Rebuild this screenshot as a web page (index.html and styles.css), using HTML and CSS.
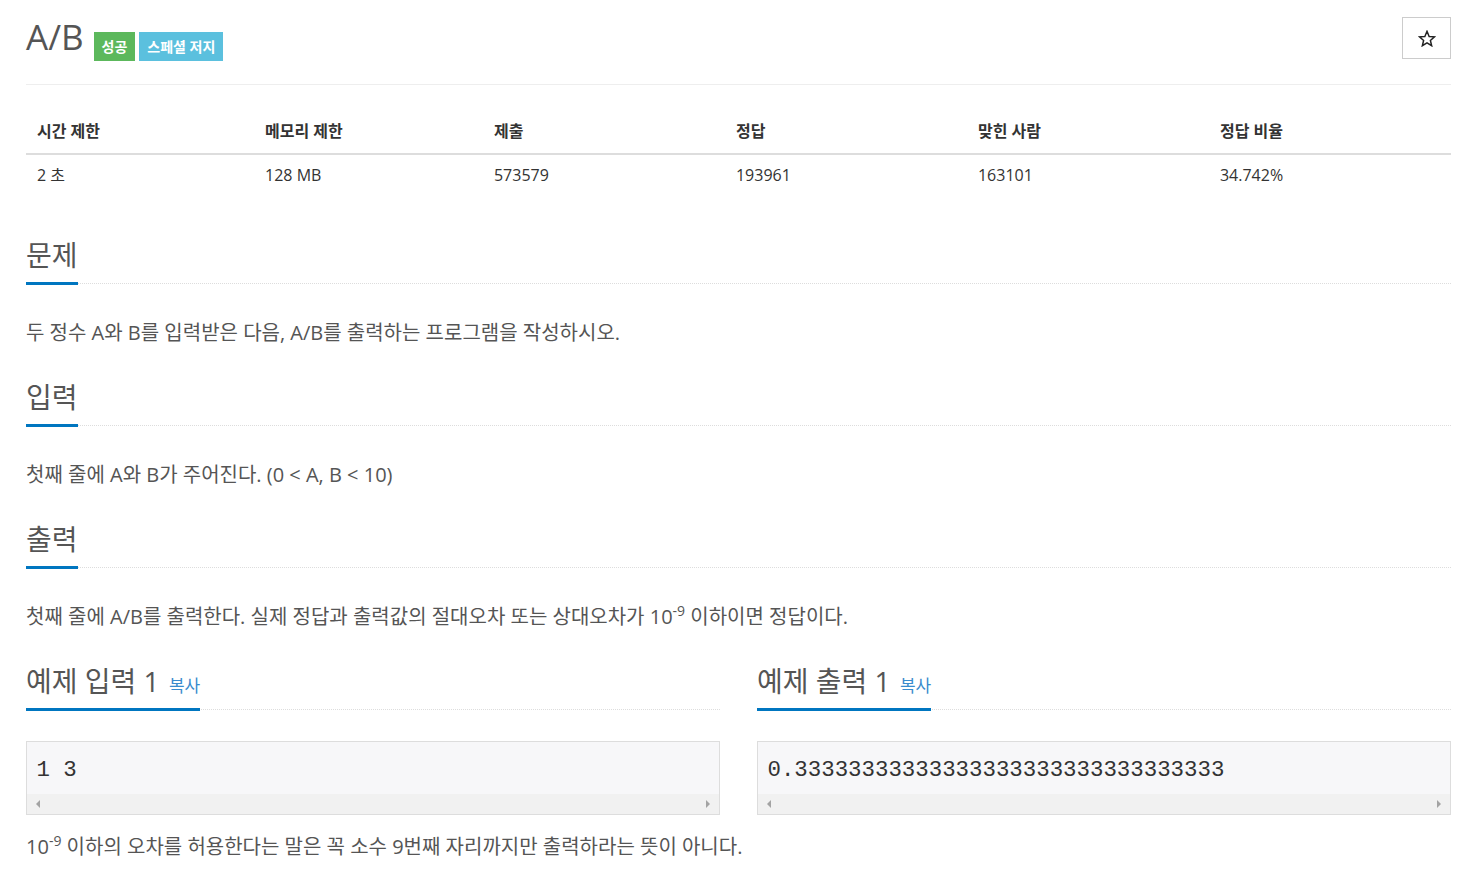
FILE: index.html
```html
<!DOCTYPE html>
<html lang="ko">
<head>
    <meta charset="UTF-8">
    <meta name="viewport" content="width=device-width, initial-scale=1.0">
    <title>A/B</title>
    <link rel="stylesheet" href="styles.css">
</head>
<body>
    <div class="page">
        <div class="page-header">
            <h1 class="title">A/B<span class="label label-success">성공</span><span class="label label-info">스페셜 저지</span></h1>
            <button class="star-btn" type="button">
                <svg width="18" height="17" viewBox="0 0 24 23">
                    <path d="M12 1.8l2.9 6.9 7.3.6-5.6 4.8 1.7 7.2L12 17.4l-6.3 3.9 1.7-7.2-5.6-4.8 7.3-.6z" fill="none" stroke="#222" stroke-width="2" stroke-linejoin="miter"/>
                </svg>
            </button>
        </div>

        <table class="info-table">
            <thead>
                <tr>
                    <th class="col-a">시간 제한</th>
                    <th class="col-b">메모리 제한</th>
                    <th class="col-c">제출</th>
                    <th class="col-c">정답</th>
                    <th class="col-c">맞힌 사람</th>
                    <th class="col-c">정답 비율</th>
                </tr>
            </thead>
            <tbody>
                <tr>
                    <td>2 초</td>
                    <td>128 MB</td>
                    <td>573579</td>
                    <td>193961</td>
                    <td>163101</td>
                    <td>34.742%</td>
                </tr>
            </tbody>
        </table>

        <section class="problem-section">
            <div class="headline"><h2><span>문제</span></h2></div>
            <p>두 정수 A와 B를 입력받은 다음, A/B를 출력하는 프로그램을 작성하시오.</p>
        </section>

        <section class="problem-section">
            <div class="headline"><h2><span>입력</span></h2></div>
            <p>첫째 줄에 A와 B가 주어진다. (0 &lt; A, B &lt; 10)</p>
        </section>

        <section class="problem-section">
            <div class="headline"><h2><span>출력</span></h2></div>
            <p>첫째 줄에 A/B를 출력한다. 실제 정답과 출력값의 절대오차 또는 상대오차가 10<sup>-9</sup> 이하이면 정답이다.</p>
        </section>

        <div class="samples">
            <div class="sample">
                <div class="headline"><h2><span>예제 입력 1 <a class="copy-btn" href="#">복사</a></span></h2></div>
                <div class="sample-box">
                    <pre>1 3</pre>
                    <div class="fake-scroll"><i class="arrow-left"></i><i class="arrow-right"></i></div>
                </div>
            </div>
            <div class="sample">
                <div class="headline"><h2><span>예제 출력 1 <a class="copy-btn" href="#">복사</a></span></h2></div>
                <div class="sample-box">
                    <pre>0.33333333333333333333333333333333</pre>
                    <div class="fake-scroll"><i class="arrow-left"></i><i class="arrow-right"></i></div>
                </div>
            </div>
        </div>

        <p class="hint">10<sup>-9</sup> 이하의 오차를 허용한다는 말은 꼭 소수 9번째 자리까지만 출력하라는 뜻이 아니다.</p>
    </div>
</body>
</html>
```

FILE: styles.css
```css
body {
    margin: 0;
    font-family: 'Open Sans', 'Noto Sans CJK KR', sans-serif;
    color: #555;
    background-color: white;
}
.page {
    margin: 0 10px 0 26px;
}
.page-header {
    display: flex;
    justify-content: space-between;
    align-items: flex-start;
    height: 42px;
    padding-top: 17px;
    padding-bottom: 25px;
    border-bottom: 1px solid #eee;
}
.title {
    margin: 0;
    font-size: 35px;
    font-weight: normal;
    line-height: 40px;
    color: #555;
}
.label {
    display: inline-block;
    vertical-align: -2px;
    font-size: 14px;
    font-weight: bold;
    line-height: 19px;
    padding: 5px 8px;
    color: white;
    margin-left: 4px;
}
.label-success {
    background-color: #5cb85c;
    margin-left: 10px;
}
.label-info {
    background-color: #5bc0de;
}
.star-btn {
    width: 49px;
    height: 42px;
    border: 1px solid #ccc;
    background-color: white;
    padding: 0;
    display: flex;
    align-items: center;
    justify-content: center;
    cursor: pointer;
}
.info-table {
    width: 100%;
    margin-top: 26px;
    border-collapse: collapse;
    table-layout: fixed;
    font-size: 16px;
    color: #333;
}
.info-table th {
    text-align: left;
    font-weight: bold;
    line-height: 21px;
    padding: 10px 11px 11px;
    border-bottom: 2px solid #ddd;
}
.info-table td {
    line-height: 21px;
    padding: 10px 11px 8px;
}
.col-a {
    width: 15.93%;
}
.col-b {
    width: 16%;
}
.col-c {
    width: 17%;
}
.problem-section {
    margin-bottom: 32px;
}
.problem-section:first-of-type {
    margin-top: 43px;
}
.headline {
    border-bottom: 1px dotted #ddd;
}
.headline h2 {
    margin: 0;
    font-size: 28px;
    font-weight: normal;
    line-height: 36px;
}
.headline span {
    display: inline-block;
    padding-bottom: 9px;
    border-bottom: 3px solid #0076c0;
    margin-bottom: -2px;
}
.problem-section p,
.hint {
    margin: 35px 0 0;
    font-size: 20px;
    line-height: 28px;
}
sup {
    font-size: 14px;
    line-height: 0;
    vertical-align: 8px;
}
.samples {
    display: grid;
    grid-template-columns: 1fr 1fr;
    column-gap: 37px;
    margin-top: 1px;
}
.copy-btn {
    font-size: 17px;
    line-height: 1;
    color: #3a8bcd;
    text-decoration: none;
    margin-left: 2px;
}
.sample-box {
    margin-top: 31px;
    border: 1px solid #ddd;
    background-color: #f7f7f9;
}
.sample-box pre {
    margin: 0;
    padding: 11.5px 9.5px 7.5px;
    font-family: 'Liberation Mono', monospace;
    font-size: 22.4px;
    line-height: 33px;
    color: #333;
}
.fake-scroll {
    height: 20px;
    background-color: #f1f1f1;
    display: flex;
    justify-content: space-between;
    align-items: center;
    padding: 0 9px;
}
.arrow-left {
    width: 0;
    height: 0;
    border-top: 4px solid transparent;
    border-bottom: 4px solid transparent;
    border-right: 4px solid #a3a3a3;
}
.arrow-right {
    width: 0;
    height: 0;
    border-top: 4px solid transparent;
    border-bottom: 4px solid transparent;
    border-left: 4px solid #a3a3a3;
}
.hint {
    margin-top: 18px;
}
```
